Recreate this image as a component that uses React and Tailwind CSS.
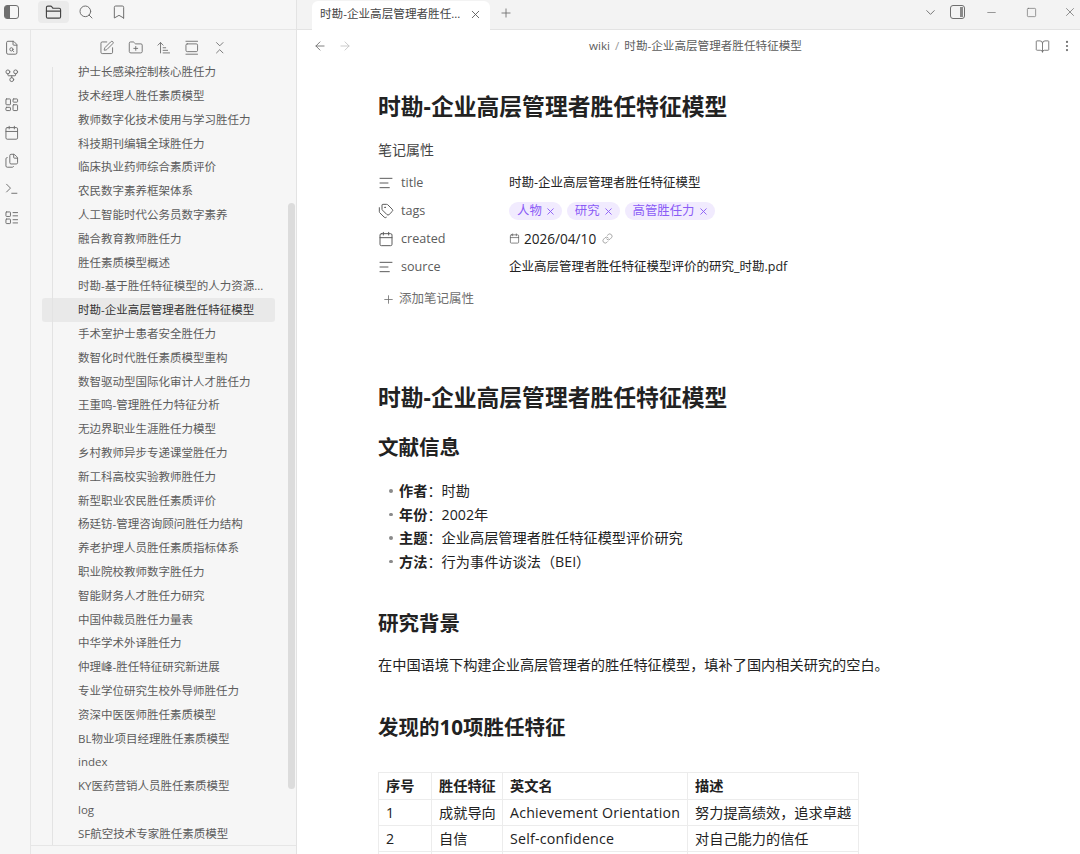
import React from "react";
import {
  FolderClosed, Search, Bookmark, FileSearch, GitFork, LayoutDashboard, Calendar, Files, Terminal, LayoutList,
  SquarePen, FolderPlus, ArrowUpNarrowWide, GalleryVertical, ChevronsDownUp, X, Plus, ChevronDown, Minus, Square,
  ArrowLeft, ArrowRight, BookOpen, EllipsisVertical, AlignLeft, Tags, Link,
} from "lucide-react";

const FILES = [
  "护士长感染控制核心胜任力", "技术经理人胜任素质模型", "教师数字化技术使用与学习胜任力", "科技期刊编辑全球胜任力",
  "临床执业药师综合素质评价", "农民数字素养框架体系", "人工智能时代公务员数字素养", "融合教育教师胜任力", "胜任素质模型概述",
  "时勘-基于胜任特征模型的人力资源...", "时勘-企业高层管理者胜任特征模型", "手术室护士患者安全胜任力", "数智化时代胜任素质模型重构",
  "数智驱动型国际化审计人才胜任力", "王重鸣-管理胜任力特征分析", "无边界职业生涯胜任力模型", "乡村教师异步专递课堂胜任力",
  "新工科高校实验教师胜任力", "新型职业农民胜任素质评价", "杨廷钫-管理咨询顾问胜任力结构", "养老护理人员胜任素质指标体系",
  "职业院校教师数字胜任力", "智能财务人才胜任力研究", "中国仲裁员胜任力量表", "中华学术外译胜任力", "仲理峰-胜任特征研究新进展",
  "专业学位研究生校外导师胜任力", "资深中医医师胜任素质模型", "BL物业项目经理胜任素质模型", "index", "KY医药营销人员胜任素质模型",
  "log", "SF航空技术专家胜任素质模型",
];

const RIBBON = [FileSearch, GitFork, LayoutDashboard, Calendar, Files, Terminal, LayoutList];
const TOOLS = [SquarePen, FolderPlus, ArrowUpNarrowWide, GalleryVertical, ChevronsDownUp];
const ACTIVE = "时勘-企业高层管理者胜任特征模型";

const PanelIcon = ({ side }) => (
  <div className={`w-[15px] h-[14px] border-[1.5px] border-[#6f6f6f] rounded-[3px] flex ${side === "left" ? "justify-start" : "justify-end"}`}>
    <div className={side === "left" ? "w-[5px] bg-[#6f6f6f] rounded-l-[1px]" : "w-[3px] mr-[1px] my-[1px] bg-[#8a8a8a]"} />
  </div>
);

const Tag = ({ children }) => (
  <span className="h-[18px] pl-[8px] pr-[6px] rounded-full bg-[#f1ebfe] text-[#8b5cf6] text-[12.4px] flex items-center gap-[3px]">
    {children}
    <X className="w-[11px] h-[11px]" strokeWidth={2} />
  </span>
);

const Prop = ({ icon: Icon, name, children }) => (
  <div className="h-[28px] flex items-center">
    <div className="w-[131px] flex items-center text-[12.6px] text-[#5c5c5c]">
      <Icon className="w-[16px] h-[16px] mr-[7px] text-[#5c5c5c]" strokeWidth={1.5} />
      {name}
    </div>
    {children}
  </div>
);

const Bullet = ({ label, children }) => (
  <li className="h-[23.5px] flex items-center pl-[11px]">
    <span className="w-[3.5px] h-[3.5px] rounded-full bg-[#8a8a8a] mr-[6.5px]" />
    <b className="font-bold">{label}</b>{"\uFF1A"}{children}
  </li>
);

const Row = ({ cells, head }) => (
  <tr className={head ? "h-[27px]" : "h-[26px]"}>
    {cells.map((c, i) =>
      head ? (
        <th key={i} className="border border-[#ececec] px-[7px] text-left font-bold">{c}</th>
      ) : (
        <td key={i} className="border border-[#ececec] px-[7px]">{c}</td>
      )
    )}
  </tr>
);

export default function App() {
  return (
    <div className="w-[1080px] h-[854px] overflow-hidden flex bg-white text-[#222222] font-['Open_Sans','Noto_Sans_CJK_SC',sans-serif]">
      {/* left side */}
      <aside className="w-[297px] shrink-0 flex flex-col bg-[#f6f6f6] border-r border-[#e3e3e3]">
        <div className="h-[30px] shrink-0 flex items-center border-b border-[#e6e6e6] pl-[4px] pb-[5px]">
          <PanelIcon side="left" />
          <div className="ml-[19px] w-[31px] h-[22px] rounded-[4px] bg-[#ebebeb] flex items-center justify-center">
            <FolderClosed className="w-[17px] h-[17px] text-[#444444]" strokeWidth={1.6} />
          </div>
          <Search className="ml-[9px] w-[16px] h-[16px] text-[#6f6f6f]" strokeWidth={1.5} />
          <Bookmark className="ml-[17px] w-[16px] h-[16px] text-[#6f6f6f]" strokeWidth={1.5} />
        </div>

        <div className="flex-1 flex min-h-0">
          <nav className="w-[31px] shrink-0 border-r border-[#e6e6e6] flex flex-col items-center pt-[10px] gap-[12.8px] pr-[6px]">
            {RIBBON.map((Icon, i) => (
              <Icon key={i} className="w-[15.5px] h-[15.5px] text-[#6f6f6f]" strokeWidth={1.5} />
            ))}
          </nav>

          <div className="flex-1 min-w-0 flex flex-col relative">
            <div className="h-[30px] shrink-0 flex items-center justify-center gap-[12.7px] pt-[6px]">
              {TOOLS.map((Icon, i) => (
                <Icon key={i} className="w-[15.5px] h-[15.5px] text-[#6f6f6f]" strokeWidth={1.4} />
              ))}
            </div>
            <div className="flex-1 min-h-0 overflow-hidden ml-[11px] w-[233px] relative">
              {FILES.map((name) => (
                <div
                  key={name}
                  className={`h-[23.8px] flex items-center pl-[36px] text-[11.5px] whitespace-nowrap rounded-[3px] ${
                    name === ACTIVE ? "bg-[#e9e9e9] text-[#333333]" : "text-[#5c5c5c]"
                  }`}
                >
                  {name}
                </div>
              ))}
              <div className="absolute left-[10px] top-[7px] bottom-0 w-px bg-[#e3e3e3]" />
            </div>
            <div className="h-[9px] shrink-0 border-t border-[#e6e6e6]" />
            <div className="absolute right-[1px] top-[173px] w-[7px] h-[586px] rounded-full bg-[#dcdcdc]" />
          </div>
        </div>
      </aside>

      {/* main */}
      <main className="flex-1 min-w-0 flex flex-col">
        <div className="h-[30px] shrink-0 bg-[#f3f3f3] border-b border-[#e3e3e3] flex items-center pl-[15px]">
          <div className="w-[178px] h-[29px] mt-[1px] bg-white rounded-t-[6px] flex items-center pl-[8px] pb-[2px] text-[11.6px] text-[#444444] whitespace-nowrap">
            时勘-企业高层管理者胜任...
            <X className="ml-[9px] w-[13px] h-[13px] text-[#555555]" strokeWidth={1.6} />
          </div>
          <Plus className="ml-[9px] mb-[3px] w-[14px] h-[14px] text-[#6f6f6f]" strokeWidth={1.5} />
          <div className="ml-auto flex items-center text-[#6f6f6f] pb-[5px]">
            <ChevronDown className="w-[15px] h-[15px]" strokeWidth={1.5} />
            <div className="ml-[12px]"><PanelIcon side="right" /></div>
            <Minus className="ml-[20px] w-[13px] h-[13px]" strokeWidth={1.3} />
            <Square className="ml-[28px] w-[11px] h-[11px]" strokeWidth={1.5} />
            <X className="ml-[26px] mr-[3px] w-[14px] h-[14px]" strokeWidth={1.3} />
          </div>
        </div>

        <div className="h-[32px] shrink-0 flex items-center pl-[16px] pr-[6px]">
          <ArrowLeft className="w-[14px] h-[14px] text-[#6f6f6f]" strokeWidth={1.5} />
          <ArrowRight className="ml-[11px] w-[14px] h-[14px] text-[#c4c4c4]" strokeWidth={1.5} />
          <div className="flex-1 pl-[4px] text-center text-[11.6px] text-[#5c5c5c] whitespace-nowrap">
            wiki<span className="mx-[5px] text-[#999999]">/</span>{ACTIVE}
          </div>
          <BookOpen className="w-[15px] h-[15px] text-[#6f6f6f]" strokeWidth={1.4} />
          <EllipsisVertical className="ml-[10px] w-[14px] h-[14px] text-[#6f6f6f]" strokeWidth={1.8} />
        </div>

        <article className="flex-1 min-h-0 overflow-hidden pl-[81px]">
          <h1 className="mt-[29px] text-[22.8px] leading-[32px] font-bold">{ACTIVE}</h1>

          <p className="mt-[17px] text-[14px] leading-[20px] text-[#444444]">笔记属性</p>
          <div className="mt-[9px] text-[12.5px]">
            <Prop icon={AlignLeft} name="title">{ACTIVE}</Prop>
            <Prop icon={Tags} name="tags">
              <div className="flex gap-[5px]">
                <Tag>人物</Tag>
                <Tag>研究</Tag>
                <Tag>高管胜任力</Tag>
              </div>
            </Prop>
            <Prop icon={Calendar} name="created">
              <span className="flex items-center text-[13.6px]">
                <Calendar className="w-[11px] h-[11px] mr-[4px] text-[#5c5c5c]" strokeWidth={1.6} />
                2026/04/10
                <Link className="ml-[6px] w-[11px] h-[11px] text-[#8a8a8a]" strokeWidth={1.6} />
              </span>
            </Prop>
            <Prop icon={AlignLeft} name="source">企业高层管理者胜任特征模型评价的研究_时勘.pdf</Prop>
          </div>
          <div className="mt-[6px] h-[24px] flex items-center pl-[4px] text-[12.5px] text-[#6f6f6f]">
            <Plus className="w-[13px] h-[13px] mr-[4px]" strokeWidth={1.5} />
            添加笔记属性
          </div>

          <h1 className="mt-[71px] text-[22.8px] leading-[32px] font-bold">{ACTIVE}</h1>
          <h2 className="mt-[19px] text-[20.5px] leading-[28px] font-bold">文献信息</h2>

          <ul className="mt-[18px] text-[14.2px]">
            <Bullet label="作者">时勘</Bullet>
            <Bullet label="年份">2002年</Bullet>
            <Bullet label="主题">企业高层管理者胜任特征模型评价研究</Bullet>
            <Bullet label="方法">{"行为事件访谈法\uFF08BEI\uFF09"}</Bullet>
          </ul>

          <h2 className="mt-[36px] text-[20.5px] leading-[28px] font-bold">研究背景</h2>
          <p className="mt-[17px] text-[14.2px] leading-[22px] whitespace-nowrap">
            {"在中国语境下构建企业高层管理者的胜任特征模型\uFF0C填补了国内相关研究的空白\u3002"}
          </p>
          <h2 className="mt-[37px] text-[20.5px] leading-[28px] font-bold">发现的10项胜任特征</h2>

          <table className="mt-[31px] w-[480px] table-fixed border-collapse text-[14.2px] whitespace-nowrap">
            <colgroup>
              <col className="w-[53px]" />
              <col className="w-[71px]" />
              <col className="w-[185px]" />
              <col className="w-[171px]" />
            </colgroup>
            <thead>
              <Row head cells={["序号", "胜任特征", "英文名", "描述"]} />
            </thead>
            <tbody>
              <Row cells={["1", "成就导向", <span className="tracking-[0.2px]">Achievement Orientation</span>, "努力提高绩效\uFF0C追求卓越"]} />
              <Row cells={["2", "自信", <span className="tracking-[0.2px]">Self-confidence</span>, "对自己能力的信任"]} />
              <Row cells={["", "", "", ""]} />
            </tbody>
          </table>
        </article>
      </main>
    </div>
  );
}
